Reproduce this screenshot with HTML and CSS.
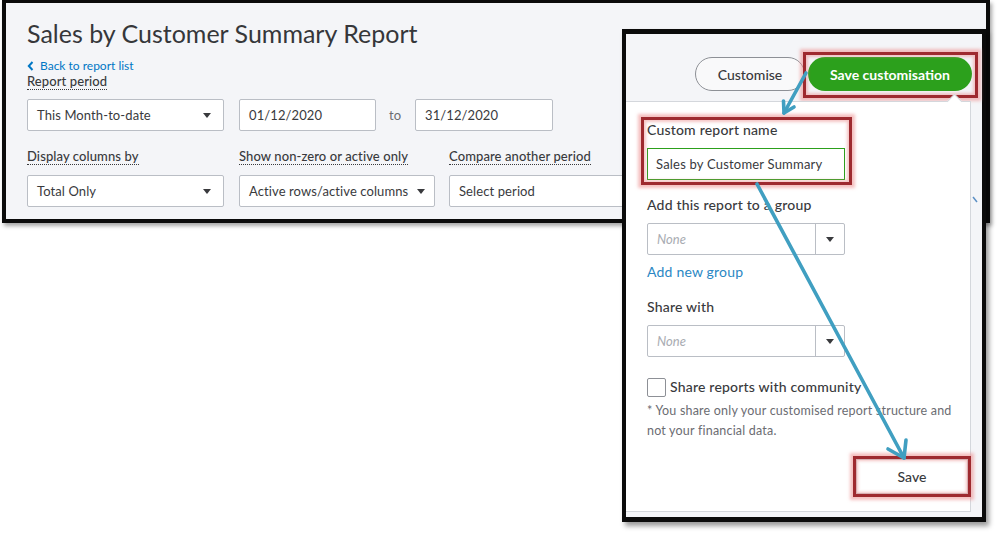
FILE: index.html
```
<!DOCTYPE html>
<html lang="en">
<head>
    <meta charset="UTF-8">
    <meta name="viewport" content="width=device-width, initial-scale=1.0">
    <title>Sales by Customer Summary Report</title>
    <link rel="stylesheet" href="styles.css">
</head>
<body>

    <!-- report header screenshot -->
    <div class="report">
        <h1 class="report-title">Sales by Customer Summary Report</h1>
        <a class="back-link" href="#">
            <svg width="7" height="10" viewBox="0 0 7 10"><path d="M5.5 1 L1.8 5 L5.5 9" fill="none" stroke="#0077c5" stroke-width="2"/></svg>
            Back to report list
        </a>
        <div class="field-label"><span class="dotted">Report period</span></div>

        <div class="filters">
            <div class="select w-period"><span>This Month-to-date</span><i class="caret"></i></div>
            <div class="input date">01/12/2020</div>
            <span class="to">to</span>
            <div class="input date">31/12/2020</div>
        </div>

        <div class="filters-2">
            <div class="filter-col col-1">
                <div class="field-label"><span class="dotted">Display columns by</span></div>
                <div class="select"><span>Total Only</span><i class="caret"></i></div>
            </div>
            <div class="filter-col col-2">
                <div class="field-label"><span class="dotted">Show non-zero or active only</span></div>
                <div class="select"><span>Active rows/active columns</span><i class="caret"></i></div>
            </div>
            <div class="filter-col col-3">
                <div class="field-label"><span class="dotted">Compare another period</span></div>
                <div class="select"><span>Select period</span></div>
            </div>
        </div>
    </div>

    <!-- customisation popover screenshot -->
    <div class="snap">
        <div class="snap-actions">
            <button class="btn btn-outline">Customise</button>
            <button class="btn btn-green hl hl-btn">Save customisation</button>
        </div>

        <div class="card">
            <div class="name-group hl">
                <div class="label-lg">Custom report name</div>
                <div class="text-input">Sales by Customer Summary</div>
            </div>

            <div class="label-lg mt-group">Add this report to a group</div>
            <div class="combo">
                <span class="combo-value">None</span>
                <span class="combo-btn"><i class="caret"></i></span>
            </div>
            <a class="add-link" href="#">Add new group</a>

            <div class="label-lg mt-share">Share with</div>
            <div class="combo">
                <span class="combo-value">None</span>
                <span class="combo-btn"><i class="caret"></i></span>
            </div>

            <label class="check-row">
                <span class="checkbox"></span>
                Share reports with community
            </label>
            <p class="note">* You share only your customised report structure and<br>not your financial data.</p>

            <div class="save-row">
                <button class="btn-save hl hl-save">Save</button>
            </div>
        </div>
    </div>

    <!-- annotation arrows -->
    <svg class="arrows" width="999" height="533" viewBox="0 0 999 533">
        <path d="M973 197 L977 202" fill="none" stroke="#5b8fc4" stroke-width="1.5"/>
        <g fill="none" stroke="#409fc1" stroke-width="3.6" stroke-linecap="round" stroke-linejoin="round">
            <path d="M806 73 L784 113"/>
            <path d="M794 107 L784 113 L783.5 101"/>
            <path d="M757 184 L904 458"/>
            <path d="M906 440 L904 458 L888 449"/>
        </g>
    </svg>

</body>
</html>
```

FILE: styles.css
```
* {
    box-sizing: border-box;
}

body {
    margin: 0;
    width: 999px;
    height: 533px;
    position: relative;
    overflow: hidden;
    background-color: #fff;
    font-family: Lato, "Open Sans", sans-serif;
    color: #393a3d;
}

/* left screenshot */
.report {
    margin: 0 9px 0 2px;
    height: 223px;
    padding: 15px 0 0 21px;
    background-color: #f4f5f8;
    border: 4px solid #0b0b0b;
    border-top-width: 3px;
    box-shadow: 2px 3px 4px rgba(0, 0, 0, 0.35);
}

.report-title {
    margin: 0;
    font-size: 25px;
    line-height: 31px;
    font-weight: 400;
    color: #36373a;
}

.back-link {
    display: flex;
    align-items: center;
    gap: 6px;
    margin-top: 9px;
    font-size: 12px;
    line-height: 15px;
    color: #0077c5;
    text-decoration: none;
}

.field-label {
    font-size: 13px;
    line-height: 16px;
    font-weight: 500;
    letter-spacing: 0.1px;
}

.dotted {
    border-bottom: 1px dotted #393a3d;
}

.filters {
    display: flex;
    align-items: center;
    margin-top: 10px;
}

.select,
.input {
    height: 32px;
    display: flex;
    align-items: center;
    padding: 0 9px;
    background-color: #fff;
    border: 1px solid #babec5;
    border-radius: 2px;
    font-size: 13px;
    letter-spacing: 0.1px;
    white-space: nowrap;
}

.select {
    justify-content: space-between;
}

.caret {
    width: 0;
    height: 0;
    border-left: 4px solid transparent;
    border-right: 4px solid transparent;
    border-top: 5px solid #393a3d;
}

.w-period {
    width: 197px;
    padding-right: 12px;
}

.date {
    width: 137px;
    margin-left: 15px;
}

.to {
    margin: 0 14px 0 13px;
    font-size: 13px;
    color: #6b6c72;
}

.to + .date {
    margin-left: 0;
    width: 138px;
}

.filters-2 {
    display: flex;
    margin-top: 17px;
}

.filter-col {
    display: flex;
    flex-direction: column;
    gap: 11px;
}

.col-1 {
    width: 197px;
}

.col-1 .select {
    padding-right: 12px;
}

.col-2 {
    width: 196px;
    margin-left: 15px;
}

.col-3 {
    width: 200px;
    margin-left: 14px;
}

/* right screenshot */
.snap {
    position: absolute;
    left: 622px;
    top: 29px;
    width: 364px;
    height: 493px;
    display: flex;
    flex-direction: column;
    background-color: #f4f5f8;
    border: 4px solid #0b0b0b;
    border-top-width: 5px;
    border-bottom-width: 5px;
    box-shadow: 3px 4px 5px rgba(0, 0, 0, 0.4);
}

.snap-actions {
    height: 67px;
    display: flex;
    justify-content: flex-end;
    gap: 3px;
    padding: 23px 10px 0 0;
}

.btn {
    height: 34px;
    border-radius: 17px;
    font-family: inherit;
    font-size: 14px;
    cursor: pointer;
}

.btn-outline {
    width: 110px;
    background-color: #f9f9fa;
    border: 1px solid #8d9096;
    color: #393a3d;
    font-weight: 500;
}

.btn-green {
    width: 164px;
    background-color: #2ca01c;
    border: none;
    color: #fff;
    font-weight: 700;
}

/* red annotation boxes */
.hl {
    position: relative;
}

.hl::after {
    content: "";
    position: absolute;
    border: 3px solid #9e2a2f;
    box-shadow: 0 0 3px 3px rgba(236, 140, 140, 0.55), inset 0 0 3px 2px rgba(236, 140, 140, 0.5);
    pointer-events: none;
}

.hl-btn::after {
    top: -5px;
    bottom: -7px;
    left: -5px;
    right: -6px;
}

.card {
    position: relative;
    flex: 1;
    margin: 0 11px 5px 0;
    padding: 18px 0 0 21px;
    background-color: #fff;
    border: 1px solid #d4d7dc;
    border-left: none;
}

.card::before {
    content: "";
    position: absolute;
    top: -6px;
    right: 10px;
    width: 10px;
    height: 10px;
    background-color: #fff;
    border-left: 1px solid #d4d7dc;
    border-top: 1px solid #d4d7dc;
    transform: rotate(45deg);
}

.name-group {
    width: 198px;
}

.name-group::after {
    top: -3px;
    bottom: -5px;
    left: -6px;
    right: -7px;
}

.label-lg {
    font-size: 14px;
    line-height: 20px;
    font-weight: 500;
    letter-spacing: 0.2px;
}

.text-input {
    margin-top: 8px;
    width: 198px;
    height: 32px;
    display: flex;
    align-items: center;
    padding-left: 8px;
    border: 1px solid #2ca01c;
    font-size: 13px;
    letter-spacing: 0.2px;
}

.mt-group {
    margin-top: 15px;
}

.mt-share {
    margin-top: 15px;
}

.combo {
    margin-top: 8px;
    width: 198px;
    height: 32px;
    display: flex;
    border: 1px solid #babec5;
    border-radius: 2px;
}

.combo-value {
    flex: 1;
    display: flex;
    align-items: center;
    padding-left: 9px;
    font-size: 13px;
    font-style: italic;
    color: #a9acb2;
}

.combo-btn {
    width: 29px;
    display: flex;
    align-items: center;
    justify-content: center;
    border-left: 1px solid #babec5;
}

.add-link {
    display: block;
    margin-top: 7px;
    font-size: 14px;
    line-height: 20px;
    letter-spacing: 0.2px;
    color: #2a87c4;
    text-decoration: none;
}

.check-row {
    display: flex;
    align-items: center;
    gap: 4px;
    margin-top: 20px;
    font-size: 14px;
    line-height: 20px;
    font-weight: 500;
    letter-spacing: 0.2px;
}

.checkbox {
    width: 19px;
    height: 19px;
    border: 1px solid #8d9096;
    border-radius: 2px;
    background-color: #fff;
}

.note {
    margin: 4px 0 0;
    font-size: 12.5px;
    line-height: 20px;
    letter-spacing: 0.2px;
    color: #6b6c72;
    white-space: nowrap;
}

.save-row {
    display: flex;
    justify-content: flex-end;
    margin: 18px 2px 0 0;
}

.btn-save {
    width: 112px;
    height: 35px;
    background-color: #fff;
    border: 1px solid #c8cbd0;
    font-family: inherit;
    font-size: 14px;
    font-weight: 500;
    color: #393a3d;
}

.hl-save::after {
    top: -4px;
    bottom: -4px;
    left: -4px;
    right: -4px;
}

.arrows {
    position: absolute;
    top: 0;
    left: 0;
    pointer-events: none;
}
```
